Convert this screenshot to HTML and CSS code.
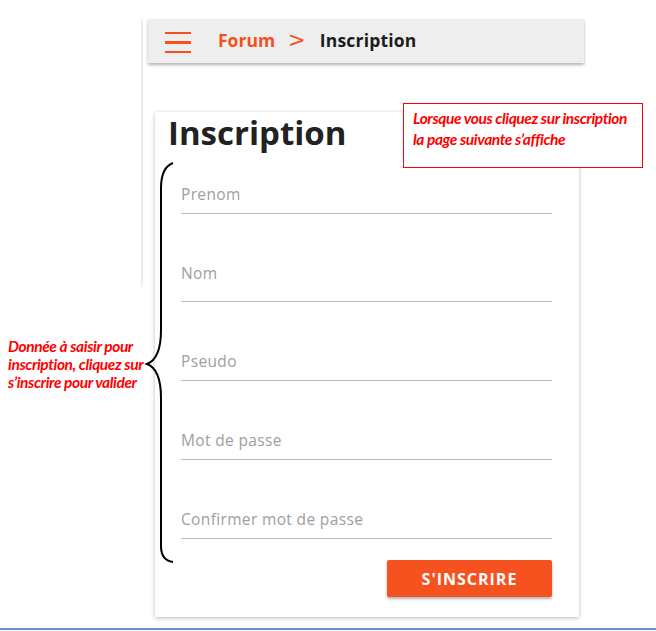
FILE: index.html
```html
<!DOCTYPE html>
<html lang="fr">
<head>
	<meta charset="UTF-8">
	<title>Inscription</title>
	<link rel="stylesheet" href="styles.css">
</head>
<body>
	<div class="page">
		<aside class="side">
			<p class="note">Donnée à saisir pour<br>inscription, cliquez sur<br>s’inscrire pour valider</p>
		</aside>

		<div class="phone">
			<header class="topbar">
				<span class="burger"><i></i><i></i><i></i></span>
				<span class="crumb crumb-link">Forum</span>
				<span class="crumb crumb-sep">&gt;</span>
				<span class="crumb crumb-here">Inscription</span>
			</header>

			<form class="card" id="signup">
				<h1>Inscription</h1>
				<div class="fields">
					<label class="field">Prenom</label>
					<label class="field field-tall">Nom</label>
					<label class="field">Pseudo</label>
					<label class="field">Mot de passe</label>
					<label class="field">Confirmer mot de passe</label>
					<div class="actions">
						<button type="submit">S'inscrire</button>
					</div>
				</div>
			</form>
		</div>

		<div class="callout">Lorsque vous cliquez sur inscription<br>la page suivante s’affiche</div>

		<svg class="brace" width="40" height="410" viewBox="0 0 40 410">
			<path d="M33 5 C25 8 21 16 21 30 L21 172 C21 194 15 203 7 206 C15 209 21 218 21 240 L21 388 C21 398 25 403 33 404" fill="none" stroke="#000" stroke-width="2"/>
		</svg>
	</div>
	<div class="rule"></div>
</body>
</html>
```

FILE: styles.css
```css
body{
	margin: 0;
	background: #fff;
	font-family: "Open Sans", Roboto, "Liberation Sans", sans-serif;
}

.page{
	position: relative;
	display: flex;
}

.side{
	width: 133px;
	padding-left: 8px;
	padding-top: 337px;
}

.note{
	margin: 0;
	font-family: Lato, "Liberation Sans", sans-serif;
	font-style: italic;
	font-weight: bold;
	font-size: 15.5px;
	line-height: 18px;
	letter-spacing: -0.4px;
	color: #f00;
	white-space: nowrap;
}

.phone{
	position: relative;
	width: 443px;
	padding-top: 19px;
	padding-bottom: 11px;
}

.phone::before{
	content: "";
	position: absolute;
	left: 0;
	top: 19px;
	width: 2px;
	height: 268px;
	background: #ededed;
}

.topbar{
	display: flex;
	align-items: center;
	margin-left: 7px;
	width: 436px;
	height: 44px;
	background: #eeeeee;
	box-shadow: 0 2px 3px rgba(0,0,0,0.3);
	font-size: 17.5px;
	line-height: 20px;
	font-weight: bold;
}

.burger{
	display: flex;
	flex-direction: column;
	gap: 7px;
	width: 26px;
	margin: 3px 27px 0 17px;
}

.burger i{
	display: block;
	height: 2.5px;
	background: #f4511e;
}

.crumb{
	margin-bottom: 3px;
}

.crumb-link{
	color: #f4511e;
}

.crumb-sep{
	font-family: "DejaVu Sans", sans-serif;
	font-weight: normal;
	font-size: 21px;
	color: #f4511e;
	margin-left: 13px;
	margin-right: 14px;
}

.crumb-here{
	color: #1c1c1c;
	letter-spacing: 0.2px;
}

.card{
	margin: 49px 0 0 14px;
	width: 424px;
	padding: 2px 0 20px;
	background: #fff;
	box-shadow: 0 1px 4px rgba(0,0,0,0.28);
}

.card h1{
	margin: 0;
	padding-left: 13px;
	font-size: 33px;
	line-height: 38px;
	font-weight: bold;
	color: #222;
}

.fields{
	padding: 0 27px 0 26px;
}

.field{
	display: block;
	margin-top: 50px;
	padding-bottom: 10px;
	font-size: 15.5px;
	line-height: 18px;
	letter-spacing: 0.35px;
	color: #9e9e9e;
	border-bottom: 1px solid #bcbcbc;
}

.field:first-child{
	margin-top: 33px;
}

.field-tall{
	padding-bottom: 19px;
}

.actions{
	display: flex;
	justify-content: flex-end;
	margin-top: 21px;
}

button{
	width: 165px;
	height: 37px;
	border: none;
	border-radius: 2px;
	background: #f5521f;
	color: #fff;
	font-family: "Open Sans", Roboto, sans-serif;
	font-size: 16px;
	font-weight: bold;
	letter-spacing: 1px;
	text-transform: uppercase;
	box-shadow: 0 2px 3px rgba(0,0,0,0.3);
}

.callout{
	position: absolute;
	left: 403px;
	top: 103px;
	width: 229px;
	height: 59px;
	padding: 4px 0 0 9px;
	border: 1px solid #f00;
	background: #fff;
	font-family: Lato, "Liberation Sans", sans-serif;
	font-style: italic;
	font-weight: bold;
	font-size: 15.5px;
	line-height: 21px;
	letter-spacing: -0.4px;
	color: #f00;
	white-space: nowrap;
}

.brace{
	position: absolute;
	left: 140px;
	top: 158px;
}

.rule{
	height: 2px;
	background: #6792d2;
}
```
